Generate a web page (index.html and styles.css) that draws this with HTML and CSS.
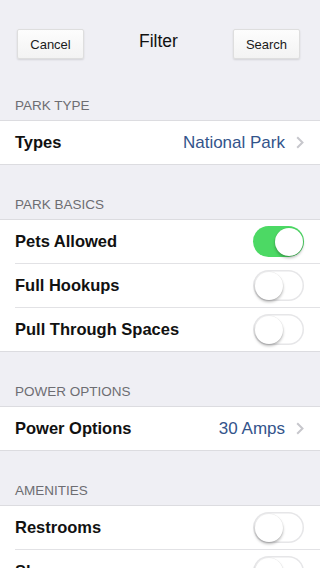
FILE: index.html
```html
<!DOCTYPE html>
<html>
<head>
<meta charset="utf-8">
<link rel="stylesheet" href="styles.css">
</head>
<body>
<div class="screen">
  <div class="nav">
    <button class="navbtn">Cancel</button>
    <div class="title">Filter</div>
    <button class="navbtn">Search</button>
  </div>

  <div class="header first">PARK TYPE</div>
  <div class="group">
    <div class="row">
      <span class="label">Types</span>
      <span class="value">National Park</span>
      <svg class="chev" width="8" height="13" viewBox="0 0 8 13"><path d="M1.2 1.2 L6.5 6.5 L1.2 11.8" fill="none" stroke="#c7c7cc" stroke-width="2"/></svg>
    </div>
  </div>

  <div class="header">PARK BASICS</div>
  <div class="group">
    <div class="row">
      <span class="label">Pets Allowed</span>
      <span class="toggle on"><span class="knob"></span></span>
    </div>
    <div class="row">
      <span class="label">Full Hookups</span>
      <span class="toggle"><span class="knob"></span></span>
    </div>
    <div class="row">
      <span class="label">Pull Through Spaces</span>
      <span class="toggle"><span class="knob"></span></span>
    </div>
  </div>

  <div class="header">POWER OPTIONS</div>
  <div class="group">
    <div class="row">
      <span class="label">Power Options</span>
      <span class="value">30 Amps</span>
      <svg class="chev" width="8" height="13" viewBox="0 0 8 13"><path d="M1.2 1.2 L6.5 6.5 L1.2 11.8" fill="none" stroke="#c7c7cc" stroke-width="2"/></svg>
    </div>
  </div>

  <div class="header">AMENITIES</div>
  <div class="group">
    <div class="row">
      <span class="label">Restrooms</span>
      <span class="toggle"><span class="knob"></span></span>
    </div>
    <div class="row">
      <span class="label">Showers</span>
      <span class="toggle"><span class="knob"></span></span>
    </div>
    <div class="row">
      <span class="label">Laundry</span>
      <span class="toggle"><span class="knob"></span></span>
    </div>
  </div>
</div>
</body>
</html>
```

FILE: styles.css
```css
html, body {
  margin: 0;
  padding: 0;
  background: #efeff4;
}
body {
  font-family: "Liberation Sans", Arial, sans-serif;
  color: #111;
}
.screen {
  width: 320px;
  min-height: 568px;
  background: #efeff4;
}
.nav {
  display: flex;
  justify-content: space-between;
  align-items: center;
  padding: 29px 20px 0 17px;
}
.navbtn {
  width: 67px;
  height: 30px;
  margin: 0;
  padding: 0;
  font-family: "Liberation Sans", Arial, sans-serif;
  font-size: 13px;
  color: #1a1a1a;
  background: linear-gradient(#fdfdfd, #f3f3f3);
  border: 1px solid #dedede;
  border-radius: 2px;
  box-shadow: 0 1px 2px rgba(0, 0, 0, 0.12);
}
.title {
  font-size: 17.5px;
  color: #111;
  padding-bottom: 6px;
}
.header {
  padding: 31px 15px 6px 15px;
  font-size: 13.5px;
  line-height: 17px;
  color: #6d6d72;
}
.header.first {
  padding-top: 38px;
}
.group {
  background: #fff;
  border-top: 1px solid #dcdce0;
  border-bottom: 1px solid #dcdce0;
  padding-left: 15px;
}
.row {
  display: flex;
  align-items: center;
  height: 43px;
  padding-right: 16px;
  border-bottom: 1px solid #e2e2e5;
}
.row:last-child {
  border-bottom: none;
}
.label {
  flex: 1;
  font-size: 16.5px;
  font-weight: bold;
  color: #111;
}
.value {
  font-size: 17px;
  color: #33548b;
  margin-right: 11px;
}
.chev {
  display: block;
  margin-right: 0;
}
.toggle {
  position: relative;
  display: block;
  width: 51px;
  height: 31px;
  border-radius: 16px;
  background: #fff;
  box-shadow: inset 0 0 0 1.5px #e6e6e8;
}
.toggle.on {
  background: #4cd964;
  box-shadow: none;
}
.knob {
  position: absolute;
  top: 1.5px;
  left: 1.5px;
  width: 28px;
  height: 28px;
  border-radius: 50%;
  background: #fff;
  box-shadow: 0 2px 3px rgba(0, 0, 0, 0.28), 0 0 0 0.5px rgba(0, 0, 0, 0.06);
}
.toggle.on .knob {
  left: 21.5px;
}
```
